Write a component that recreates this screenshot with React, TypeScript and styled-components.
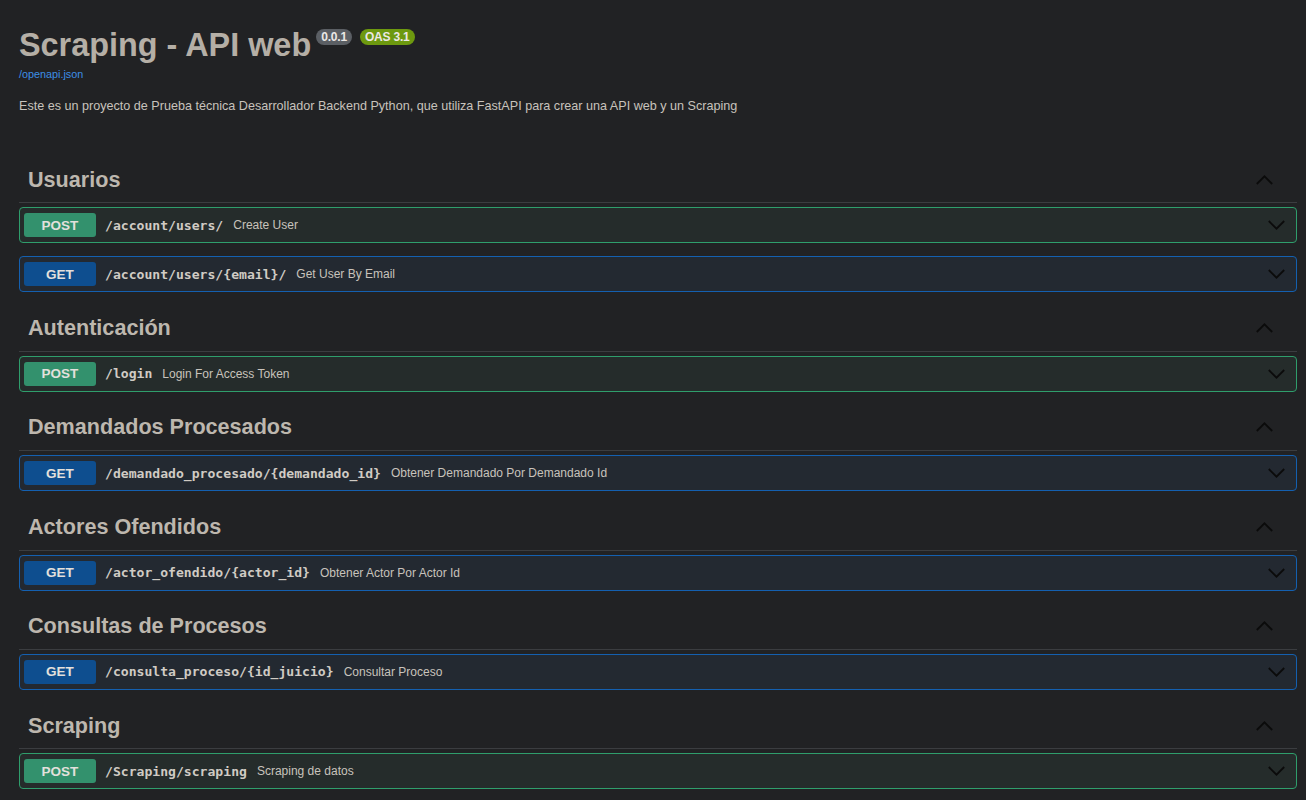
import React from "react";
import styled, { createGlobalStyle } from "styled-components";

const GlobalStyle = createGlobalStyle`
  html, body { margin: 0; padding: 0; background: #212224; }
  body { font-family: "Liberation Sans", Arial, sans-serif; color: #c8c3bc; }
`;

type Method = "POST" | "GET";

const palette: Record<Method, { border: string; bg: string; badge: string }> = {
  POST: { border: "#2f9e6c", bg: "#252c2b", badge: "#33916d" },
  GET: { border: "#1460b0", bg: "#232931", badge: "#0e4e8f" },
};

const Page = styled.div`
  padding: 0 9px 0 19px;
`;

const Info = styled.header`
  padding-top: 25px;
  margin-bottom: 43px;
`;

const TitleRow = styled.h2`
  margin: 0;
  font-family: "Liberation Sans", Arial, sans-serif;
  font-size: 32.4px;
  font-weight: 700;
  line-height: 41px;
  color: #b5afa6;
  display: flex;
  align-items: flex-start;
`;

const Badges = styled.span`
  display: inline-flex;
  gap: 8px;
  margin-left: 5px;
  margin-top: 4px;
`;

const Badge = styled.span<{ $color: string }>`
  display: inline-block;
  background: ${(p) => p.$color};
  color: #ebe8e4;
  font-size: 12px;
  font-weight: 700;
  line-height: 16px;
  padding: 0 5px;
  letter-spacing: -0.2px;
  border-radius: 57px;
`;

const Url = styled.a`
  display: block;
  margin-top: 1px;
  font-size: 10.8px;
  line-height: 14px;
  color: #3d8fe6;
  text-decoration: none;
`;

const Description = styled.p`
  margin: 17px 0 0;
  font-size: 12.6px;
  line-height: 16px;
  color: #c8c3bc;
`;

const Section = styled.section`
  display: flex;
  flex-direction: column;
`;

const TagHeading = styled.h3`
  margin: 0 0 4px;
  height: 45.4px;
  padding: 0 24px 0 9px;
  display: flex;
  align-items: center;
  justify-content: space-between;
  border-bottom: 1px solid #3b3d40;
  font-size: 21.6px;
  font-weight: 700;
  color: #bdb7ae;
`;

const Block = styled.div<{ $method: Method }>`
  height: 36px;
  box-sizing: border-box;
  margin-bottom: 13px;
  border: 1px solid ${(p) => palette[p.$method].border};
  background: ${(p) => palette[p.$method].bg};
  border-radius: 4px;
  display: flex;
  align-items: center;
  padding: 0 11px 0 4px;
`;

const MethodBadge = styled.span<{ $method: Method }>`
  width: 72px;
  height: 24px;
  flex: none;
  border-radius: 3px;
  background: ${(p) => palette[p.$method].badge};
  color: #e3e0dc;
  font-size: 13.5px;
  font-weight: 700;
  display: flex;
  align-items: center;
  justify-content: center;
`;

const Path = styled.span`
  margin-left: 9px;
  font-family: "DejaVu Sans Mono", "Liberation Mono", monospace;
  font-size: 13.1px;
  font-weight: 700;
  color: #d0cbc4;
`;

const Summary = styled.span`
  margin-left: 10px;
  font-size: 12px;
  color: #c8c3bc;
  flex: 1;
`;

const Chevron = ({ up }: { up?: boolean }) => (
  <svg width="17" height="10" viewBox="0 0 17 10" style={{ flex: "none" }}>
    <path
      d={up ? "M0.8 9 L8.5 1.3 L16.2 9" : "M0.8 1 L8.5 8.7 L16.2 1"}
      fill="none"
      stroke="#0b0b0b"
      strokeWidth="1.8"
    />
  </svg>
);

type Op = { method: Method; path: string; summary: string };
const sections: { name: string; ops: Op[] }[] = [
  {
    name: "Usuarios",
    ops: [
      { method: "POST", path: "/account/users/", summary: "Create User" },
      { method: "GET", path: "/account/users/{email}/", summary: "Get User By Email" },
    ],
  },
  { name: "Autenticación", ops: [{ method: "POST", path: "/login", summary: "Login For Access Token" }] },
  {
    name: "Demandados Procesados",
    ops: [
      {
        method: "GET",
        path: "/demandado_procesado/{demandado_id}",
        summary: "Obtener Demandado Por Demandado Id",
      },
    ],
  },
  {
    name: "Actores Ofendidos",
    ops: [{ method: "GET", path: "/actor_ofendido/{actor_id}", summary: "Obtener Actor Por Actor Id" }],
  },
  {
    name: "Consultas de Procesos",
    ops: [{ method: "GET", path: "/consulta_proceso/{id_juicio}", summary: "Consultar Proceso" }],
  },
  {
    name: "Scraping",
    ops: [{ method: "POST", path: "/Scraping/scraping", summary: "Scraping de datos" }],
  },
];

export default function App() {
  return (
    <Page>
      <GlobalStyle />
      <Info>
        <TitleRow>
          Scraping - API web
          <Badges>
            <Badge $color="#5b5f64">0.0.1</Badge>
            <Badge $color="#6d990f">OAS 3.1</Badge>
          </Badges>
        </TitleRow>
        <Url href="#">/openapi.json</Url>
        <Description>
          Este es un proyecto de Prueba técnica Desarrollador Backend Python, que utiliza FastAPI para crear
          una API web y un Scraping
        </Description>
      </Info>
      {sections.map((s) => (
        <Section key={s.name}>
          <TagHeading>
            <span>{s.name}</span>
            <Chevron up />
          </TagHeading>
          {s.ops.map((o) => (
            <Block key={o.path} $method={o.method}>
              <MethodBadge $method={o.method}>{o.method}</MethodBadge>
              <Path>{o.path}</Path>
              <Summary>{o.summary}</Summary>
              <Chevron />
            </Block>
          ))}
        </Section>
      ))}
    </Page>
  );
}
